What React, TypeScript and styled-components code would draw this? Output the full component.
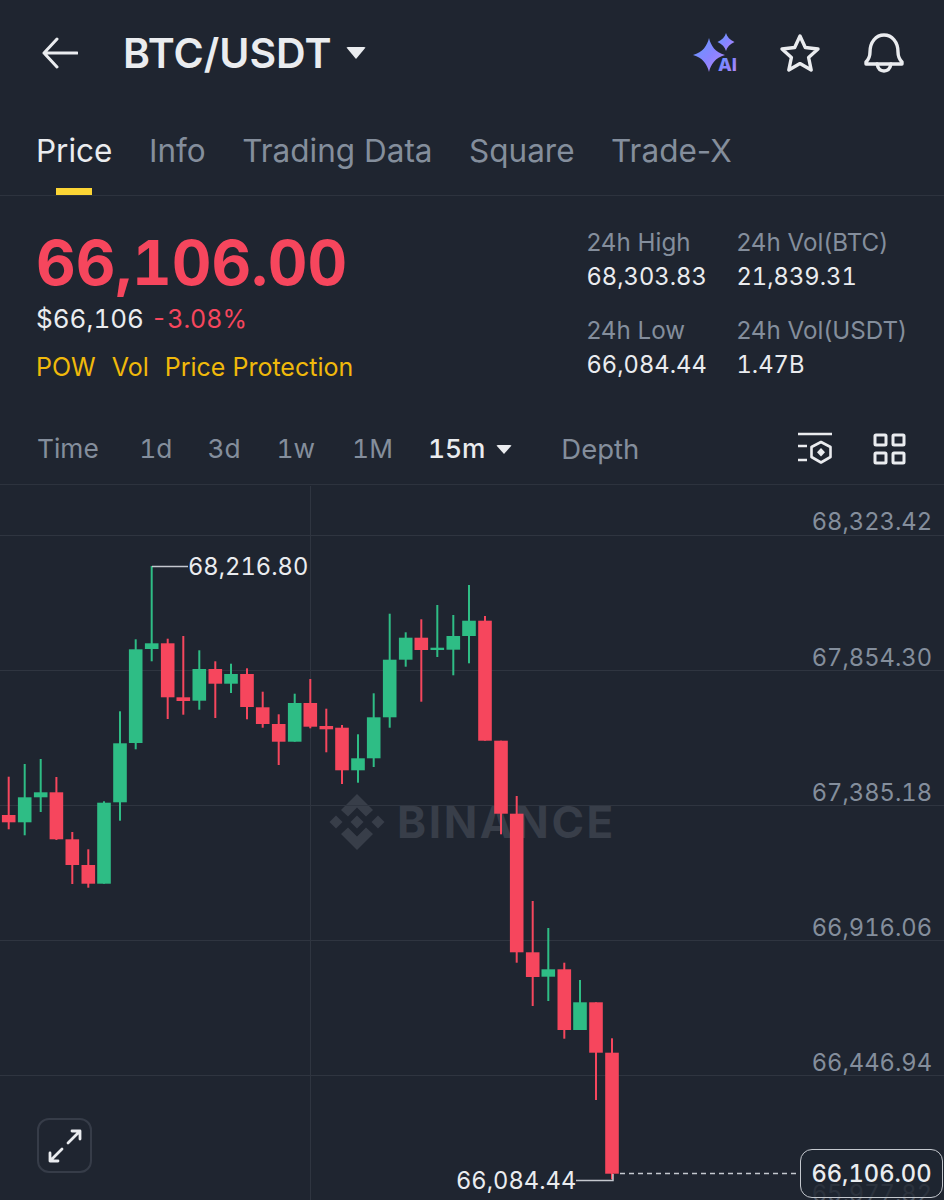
import React from 'react';
import styled, { createGlobalStyle } from 'styled-components';

const GlobalStyle = createGlobalStyle`
  html, body {
    margin: 0;
    padding: 0;
    background: #1f2530;
  }
  * { box-sizing: border-box; }
`;

const UP = '#2ebd85';
const DOWN = '#f6465d';

// [x, wick top, wick bottom, body top, body bottom]
const upCandles = [
  [24.7, 764, 835.3, 797.3, 822.3],
  [40.7, 759, 812, 792.3, 797.3],
  [104, 801.3, 883.7, 802.7, 883.7],
  [120, 711.3, 820.7, 743.3, 802.3],
  [135.7, 639.3, 749.3, 649.3, 743],
  [151.7, 566, 661.3, 643.3, 649],
  [199.3, 650.3, 709.7, 669, 700.7],
  [231, 663.7, 693, 674, 683.7],
  [294.7, 693.7, 741.7, 703, 741.7],
  [358, 734.3, 782.7, 758.3, 770.3],
  [373.7, 693.3, 767, 717.3, 758.3],
  [389.7, 613.7, 727.7, 659.7, 717.3],
  [405.7, 632.3, 666.7, 637.7, 659.7],
  [437.3, 605, 657, 647.7, 650],
  [453.3, 615, 675.3, 636, 649.7],
  [469, 585, 663.3, 620.7, 636],
  [548.3, 928, 1001, 969.3, 976.7],
  [580, 980, 1030, 1002.3, 1030],
];

const downCandles = [
  [8.7, 776.7, 829.3, 815, 822.3],
  [56.4, 777, 840, 792.3, 839.3],
  [72.3, 832, 884, 839.3, 865],
  [88.3, 849.3, 887.7, 865, 883.7],
  [167.7, 638.7, 719, 643.3, 697.3],
  [183.3, 636, 714.7, 697.3, 701],
  [215.3, 661.3, 718, 669, 683.7],
  [247, 668.3, 719.3, 674, 707],
  [262.7, 691.7, 727.7, 707.3, 724],
  [278.7, 714.3, 765, 724, 741.7],
  [310.3, 679, 728.3, 703, 726.7],
  [326.3, 708.7, 752.3, 726, 729.3],
  [342, 725, 784, 727.7, 770.3],
  [421.3, 619.3, 701.7, 637.7, 650],
  [485, 616, 740.7, 620.7, 740.7],
  [501, 740.7, 834.3, 740.7, 813.7],
  [516.7, 796, 962.7, 813.7, 952.3],
  [532.7, 901, 1006, 952.3, 977],
  [564.3, 962.7, 1038.7, 969.3, 1030],
  [596, 1002.3, 1100, 1002.3, 1052.7],
  [612, 1038.3, 1179.3, 1052.7, 1173.7],
];

const gridLines = [535, 670, 805, 940, 1075];

const axisLabels = [
  { price: '68,323.42', top: 20.5 },
  { price: '67,854.30', top: 156.5 },
  { price: '67,385.18', top: 291.5 },
  { price: '66,916.06', top: 426.5 },
  { price: '66,446.94', top: 561.5 },
];

const tabs = ['Price', 'Info', 'Trading Data', 'Square', 'Trade-X'];
const intervals = [
  { label: 'Time', gap: 40.5 },
  { label: '1d', gap: 35 },
  { label: '3d', gap: 36 },
  { label: '1w', gap: 37 },
  { label: '1M', gap: 35 },
];

const Page = styled.div`
  width: 944px;
  height: 1200px;
  overflow: hidden;
  display: flex;
  flex-direction: column;
  background: #1f2530;
  color: #eaecef;
  font-family: Inter, "Liberation Sans", sans-serif;
`;

const Header = styled.header`
  height: 105px;
  flex-shrink: 0;
  display: flex;
  align-items: center;
  padding: 0 40px 0 42px;
`;

const BackIcon = styled.svg`
  width: 36px;
  height: 32px;
  margin-right: 45px;
`;

const Title = styled.h1`
  margin: 0;
  font-size: 41px;
  line-height: 46px;
  font-weight: 600;
  letter-spacing: 0;
  color: #eaecef;
`;

const Caret = styled.span<{ $size: number }>`
  display: inline-block;
  border-left: ${p => p.$size}px solid transparent;
  border-right: ${p => p.$size}px solid transparent;
  border-top: ${p => p.$size * 1.15}px solid #eaecef;
  border-radius: 2px;
`;

const TitleCaret = styled(Caret)`
  margin-left: 15px;
`;

const HeaderActions = styled.div`
  margin-left: auto;
  display: flex;
  align-items: center;
  gap: 43px;
`;

const AiSvg = styled.svg`
  margin-right: -2px;
`;

const TabBar = styled.nav`
  height: 91px;
  flex-shrink: 0;
  display: flex;
  gap: 36.500px;
  padding: 28px 0 0 36px;
  border-bottom: 1px solid #2d333e;
`;

const Tab = styled.div<{ $active?: boolean }>`
  position: relative;
  height: 62px;
  font-size: 31.500px;
  line-height: 36px;
  font-weight: 400;
  color: ${p => (p.$active ? '#eaecef' : '#848e9c')};

  &::after {
    content: '';
    display: ${p => (p.$active ? 'block' : 'none')};
    position: absolute;
    left: 50%;
    bottom: 0;
    width: 36px;
    height: 7px;
    transform: translateX(-50%);
    background: #fcd535;
  }
`;

const Summary = styled.section`
  height: 218px;
  flex-shrink: 0;
  display: flex;
  justify-content: space-between;
  align-items: flex-start;
  padding: 32px 36.500px 0 36px;
`;

const PriceColumn = styled.div`
  display: flex;
  flex-direction: column;
`;

const LastPrice = styled.div`
  font-size: 61.500px;
  line-height: 70px;
  font-weight: 700;
  font-variant-numeric: tabular-nums;
  color: ${DOWN};
`;

const FiatRow = styled.div`
  margin-top: 6px;
  display: flex;
  align-items: baseline;
  gap: 7px;
  font-size: 26px;
  line-height: 30px;
  font-variant-numeric: tabular-nums;
`;

const Change = styled.span`
  font-size: 25px;
  color: ${DOWN};
`;

const TagRow = styled.div`
  margin-top: 18px;
  display: flex;
  gap: 16px;
  font-size: 25px;
  line-height: 30px;
  color: #f0b90b;
`;

const Stats = styled.div`
  display: grid;
  grid-template-columns: 150px 171px;
  row-gap: 20px;
  margin-top: -2px;
`;

const Stat = styled.div`
  line-height: 34px;
  white-space: nowrap;
`;

const StatLabel = styled.div`
  font-size: 24.200px;
  color: #848e9c;
`;

const StatValue = styled.div`
  font-size: 23.700px;
  font-variant-numeric: tabular-nums;
  color: #eaecef;
`;

const IntervalBar = styled.div`
  height: 71px;
  flex-shrink: 0;
  display: flex;
  align-items: center;
  padding: 0 38px 0 37px;
  border-bottom: 1px solid #2d333e;
  font-variant-numeric: tabular-nums;
`;

const Interval = styled.span<{ $gap?: number; $active?: boolean }>`
  font-size: 26.300px;
  line-height: 34px;
  margin-right: ${p => p.$gap ?? 0}px;
  color: ${p => (p.$active ? '#eaecef' : '#848e9c')};
  font-weight: ${p => (p.$active ? 500 : 400)};
`;

const DepthTab = styled(Interval)`
  font-size: 27.500px;
`;

const IntervalCaret = styled(Caret)`
  margin: 0 49px 0 11px;
`;

const IntervalActions = styled.div`
  margin-left: auto;
  display: flex;
  align-items: center;
  gap: 40px;
`;

const Chart = styled.div`
  position: relative;
  flex: 1;
  overflow: hidden;
  font-variant-numeric: tabular-nums;
`;

const Watermark = styled.div`
  position: absolute;
  left: 329px;
  top: 309px;
  display: flex;
  align-items: center;
  gap: 12px;
`;

const WatermarkText = styled.span`
  font-size: 44px;
  line-height: 56px;
  font-weight: 700;
  letter-spacing: 2.600px;
  color: #383e49;
`;

const ChartCanvas = styled.svg`
  position: absolute;
  inset: 0;
  display: block;
`;

const AxisLabel = styled.span<{ $top: number; $dim?: boolean }>`
  position: absolute;
  right: 12px;
  top: ${p => p.$top}px;
  font-size: 23.700px;
  line-height: 32px;
  color: #848e9c;
  opacity: ${p => (p.$dim ? 0.5 : 1)};
`;

const ExtremeLabel = styled.span<{ $left: number; $top: number }>`
  position: absolute;
  left: ${p => p.$left}px;
  top: ${p => p.$top}px;
  font-size: 23.700px;
  line-height: 32px;
  color: #eaecef;
`;

const CurrentPrice = styled.div`
  position: absolute;
  left: 800px;
  top: 664px;
  width: 143px;
  height: 49px;
  display: flex;
  align-items: center;
  justify-content: center;
  border: 1px solid #c4c8ce;
  border-radius: 12px;
  background: rgba(31, 37, 48, 0.75);
  font-size: 23.700px;
  font-weight: 500;
  color: #eaecef;
`;

const ExpandButton = styled.button`
  position: absolute;
  left: 37px;
  top: 633px;
  width: 55px;
  height: 55px;
  padding: 0;
  display: flex;
  align-items: center;
  justify-content: center;
  background: transparent;
  border: 2px solid #363c48;
  border-radius: 12px;
`;

const AiIcon = () => (
  <AiSvg width="46" height="42" viewBox="0 0 46 42">
    <defs>
      <linearGradient id="aiFill" x1="0" y1="0" x2="1" y2="1">
        <stop offset="0" stopColor="#5f9bff" />
        <stop offset="0.55" stopColor="#8a83ff" />
        <stop offset="1" stopColor="#b98cf5" />
      </linearGradient>
    </defs>
    <path d="M17 6 C19 14 23 20 33 23 C23 26 19 32 17 40 C15 32 11 26 1 23 C11 20 15 14 17 6Z" fill="url(#aiFill)" />
    <path d="M34 1 C35 5 38 8 42.500 10 C38 12 35 15 34 19 C33 15 30 12 25.500 10 C30 8 33 5 34 1Z" fill="url(#aiFill)" />
    <text x="26" y="39" fontFamily="Inter, sans-serif" fontSize="18" fontWeight="800" fill="url(#aiFill)">AI</text>
  </AiSvg>
);

const StarIcon = () => (
  <svg width="42" height="40" viewBox="0 0 42 40" fill="none" stroke="#eaecef" strokeWidth="3.4" strokeLinejoin="round">
    <path d="M21 3 L26.300 14.500 L39 16 L29.600 24.500 L32.200 37 L21 30.600 L9.800 37 L12.400 24.500 L3 16 L15.700 14.500Z" />
  </svg>
);

const BellIcon = () => (
  <svg width="40" height="42" viewBox="0 0 40 42" fill="none" stroke="#eaecef" strokeWidth="3.4" strokeLinejoin="round" strokeLinecap="round">
    <path d="M6 20 C6 10 12 3 20 3 C28 3 34 10 34 20 C34 25 36 28 38 30 L38 32 L2 32 L2 30 C4 28 6 25 6 20Z" />
    <path d="M13 32 C14 37 17 39 20 39 C23 39 26 37 27 32" />
  </svg>
);

const IndicatorIcon = () => (
  <svg width="36" height="34" viewBox="0 0 36 34" fill="none" stroke="#eaecef" strokeWidth="2.6">
    <path d="M1 2 H35" />
    <path d="M1 14 H10 M1 28 H10" />
    <path d="M24 10 L33.500 15 V25 L24 30.500 L14.500 25 V15Z" strokeLinejoin="round" />
    <path d="M24 16 L28 20.200 L24 24.400 L20 20.200Z" fill="#eaecef" stroke="none" />
  </svg>
);

const GridIcon = () => (
  <svg width="33" height="32" viewBox="0 0 33 32" fill="none" stroke="#eaecef" strokeWidth="3">
    <rect x="2" y="2" width="11" height="10" rx="1" />
    <rect x="20" y="2" width="11" height="10" rx="1" />
    <rect x="2" y="20" width="11" height="10" rx="1" />
    <rect x="20" y="20" width="11" height="10" rx="1" />
  </svg>
);

const BinanceMark = () => (
  <svg width="56" height="56" viewBox="0 0 56 56" fill="#383e49">
    <path d="M28 0 L44 16 L37 22.500 L28 13.500 L19 22.500 L12 16Z" />
    <path d="M28 56 L44 40 L37 33.500 L28 42.500 L19 33.500 L12 40Z" />
    <path d="M7 21.500 L13.500 28 L7 34.500 L0.500 28Z" />
    <path d="M49 21.500 L55.500 28 L49 34.500 L42.500 28Z" />
    <path d="M28 21.500 L34.500 28 L28 34.500 L21.500 28Z" />
  </svg>
);

const Candles = ({ items, color }: { items: number[][]; color: string }) => (
  <g fill={color}>
    {items.map(([x, wickTop, wickBottom, bodyTop, bodyBottom]) => (
      <g key={x}>
        <rect x={x - 1} y={wickTop} width={2} height={wickBottom - wickTop} />
        <rect x={x - 6.8} y={bodyTop} width={13.6} height={Math.max(bodyBottom - bodyTop, 2)} />
      </g>
    ))}
  </g>
);

const App = () => (
  <Page>
    <GlobalStyle />
    <Header>
      <BackIcon viewBox="0 0 36 32" fill="none" stroke="#eaecef" strokeWidth="3" strokeLinecap="round" strokeLinejoin="round">
        <path d="M2 16 H35 M15 2 L2 16 L15 30" />
      </BackIcon>
      <Title>BTC/USDT</Title>
      <TitleCaret $size={10.5} />
      <HeaderActions>
        <AiIcon />
        <StarIcon />
        <BellIcon />
      </HeaderActions>
    </Header>

    <TabBar>
      {tabs.map((tab, i) => (
        <Tab key={tab} $active={i === 0}>{tab}</Tab>
      ))}
    </TabBar>

    <Summary>
      <PriceColumn>
        <LastPrice>66,106.00</LastPrice>
        <FiatRow>
          <span>$66,106</span>
          <Change>-3.08%</Change>
        </FiatRow>
        <TagRow>
          <span>POW</span>
          <span>Vol</span>
          <span>Price Protection</span>
        </TagRow>
      </PriceColumn>
      <Stats>
        <Stat>
          <StatLabel>24h High</StatLabel>
          <StatValue>68,303.83</StatValue>
        </Stat>
        <Stat>
          <StatLabel>24h Vol(BTC)</StatLabel>
          <StatValue>21,839.31</StatValue>
        </Stat>
        <Stat>
          <StatLabel>24h Low</StatLabel>
          <StatValue>66,084.44</StatValue>
        </Stat>
        <Stat>
          <StatLabel>24h Vol(USDT)</StatLabel>
          <StatValue>1.47B</StatValue>
        </Stat>
      </Stats>
    </Summary>

    <IntervalBar>
      {intervals.map(item => (
        <Interval key={item.label} $gap={item.gap}>{item.label}</Interval>
      ))}
      <Interval $active>15m</Interval>
      <IntervalCaret $size={8} />
      <DepthTab>Depth</DepthTab>
      <IntervalActions>
        <IndicatorIcon />
        <GridIcon />
      </IntervalActions>
    </IntervalBar>

    <Chart>
      <Watermark>
        <BinanceMark />
        <WatermarkText>BINANCE</WatermarkText>
      </Watermark>
      <ChartCanvas width="944" height="715" viewBox="0 485 944 715">
        {gridLines.map(y => (
          <line key={y} x1="0" x2="944" y1={y + 0.5} y2={y + 0.5} stroke="#2f3540" strokeWidth="1" />
        ))}
        <line x1="310.500" x2="310.500" y1="486" y2="1200" stroke="#2f3540" strokeWidth="1" />
        <Candles items={upCandles} color={UP} />
        <Candles items={downCandles} color={DOWN} />
        <path d="M152 566.500 H188" stroke="#c4c8ce" strokeWidth="1.500" fill="none" />
        <path d="M613 1174 V1180.500 H576" stroke="#c4c8ce" strokeWidth="1.500" fill="none" />
        <line x1="620" x2="798" y1="1173.500" y2="1173.500" stroke="#c4c8ce" strokeWidth="1.500" strokeDasharray="5 4" />
      </ChartCanvas>
      {axisLabels.map(label => (
        <AxisLabel key={label.price} $top={label.top}>{label.price}</AxisLabel>
      ))}
      <AxisLabel $top={693} $dim>65,977.82</AxisLabel>
      <ExtremeLabel $left={188} $top={66}>68,216.80</ExtremeLabel>
      <ExtremeLabel $left={456} $top={680}>66,084.44</ExtremeLabel>
      <CurrentPrice>66,106.00</CurrentPrice>
      <ExpandButton>
        <svg width="36" height="36" viewBox="0 0 36 36" fill="none" stroke="#eaecef" strokeWidth="2.8" strokeLinecap="round" strokeLinejoin="round">
          <path d="M21 15 L33 3 M25 3 H33 V11" />
          <path d="M15 21 L3 33 M11 33 H3 V25" />
        </svg>
      </ExpandButton>
    </Chart>
  </Page>
);

export default App;
